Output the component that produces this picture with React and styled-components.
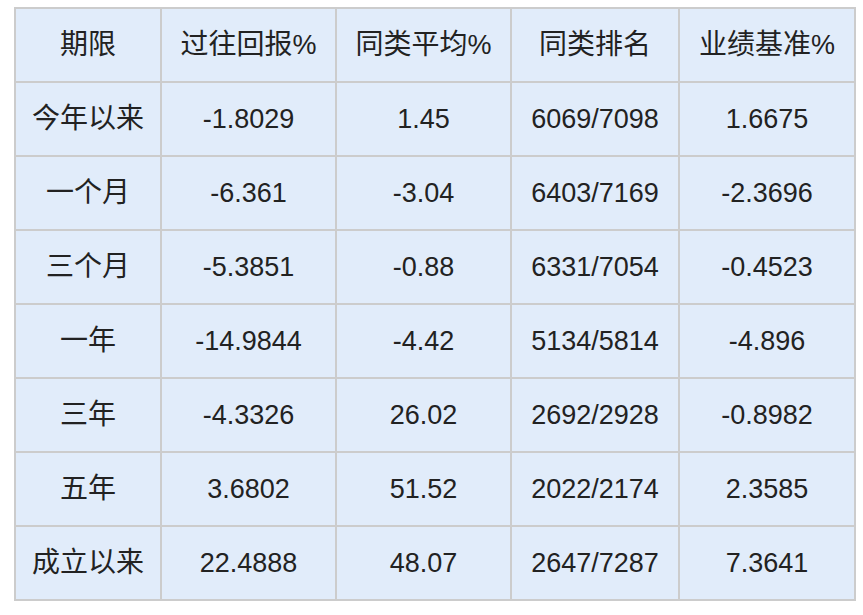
import React from "react";
import styled, { createGlobalStyle } from "styled-components";

const Global = createGlobalStyle`
  html, body { margin: 0; padding: 0; background: #ffffff; }
  body { font-family: "Liberation Sans", "Noto Sans CJK SC", sans-serif; }
`;

const Page = styled.div`
  padding: 7px 0 0 14px;
`;

const Table = styled.table`
  border-collapse: collapse;
  table-layout: fixed;
  width: 840px;
  background: #e1ecfa;
  border: 2px solid #cccccc;
`;

const Row = styled.tr`
  height: 74px;
`;

const Cell = styled.td`
  border: 2px solid #cccccc;
  padding: 0;
  text-align: center;
  vertical-align: middle;
  font-size: 27px;
  line-height: 32px;
  color: #222222;
  font-weight: normal;
  font-family: "Liberation Sans", "Noto Sans CJK SC", sans-serif;
`;

const HeadCell = styled(Cell).attrs({ as: "th" })``;

const Zh = styled.span`
  font-family: "Noto Sans CJK SC", sans-serif;
  font-size: 28px;
  line-height: 32px;
  display: inline-block;
  vertical-align: middle;
  padding-bottom: 6px;
`;

const Pct = styled.span`
  display: inline-block;
  vertical-align: middle;
  line-height: 32px;
`;

const widths = [146, 175, 175, 168, 176];
const headers = ["期限", "过往回报%", "同类平均%", "同类排名", "业绩基准%"];
const rows = [
  ["今年以来", "-1.8029", "1.45", "6069/7098", "1.6675"],
  ["一个月", "-6.361", "-3.04", "6403/7169", "-2.3696"],
  ["三个月", "-5.3851", "-0.88", "6331/7054", "-0.4523"],
  ["一年", "-14.9844", "-4.42", "5134/5814", "-4.896"],
  ["三年", "-4.3326", "26.02", "2692/2928", "-0.8982"],
  ["五年", "3.6802", "51.52", "2022/2174", "2.3585"],
  ["成立以来", "22.4888", "48.07", "2647/7287", "7.3641"],
];

function Header({ text }) {
  const hasPct = text.endsWith("%");
  const zh = hasPct ? text.slice(0, -1) : text;
  return (
    <HeadCell>
      <Zh>{zh}</Zh>
      {hasPct && <Pct>%</Pct>}
    </HeadCell>
  );
}

export default function App() {
  return (
    <Page>
      <Global />
      <Table>
        <colgroup>
          {widths.map((w, i) => (
            <col key={i} style={{ width: w }} />
          ))}
        </colgroup>
        <thead>
          <Row>
            {headers.map((h) => (
              <Header key={h} text={h} />
            ))}
          </Row>
        </thead>
        <tbody>
          {rows.map((r) => (
            <Row key={r[0]}>
              <Cell>
                <Zh>{r[0]}</Zh>
              </Cell>
              {r.slice(1).map((c, i) => (
                <Cell key={i}>{c}</Cell>
              ))}
            </Row>
          ))}
        </tbody>
      </Table>
    </Page>
  );
}
